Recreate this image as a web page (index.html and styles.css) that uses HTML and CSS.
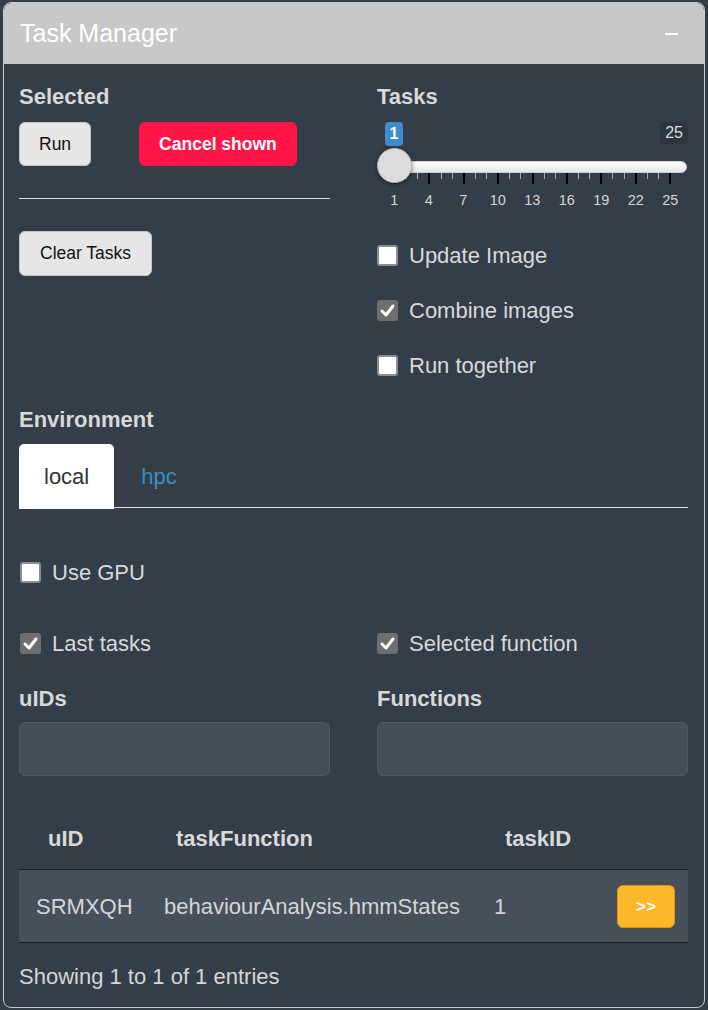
FILE: index.html
```html
<!DOCTYPE html>
<html>
<head>
<meta charset="utf-8">
<link rel="stylesheet" href="styles.css">
</head>
<body>
<div class="panel">
  <div class="panel-head">
    <span class="title">Task Manager</span>
    <span class="minus"></span>
  </div>
  <div class="panel-body">
    <div class="cols top">
      <div class="col">
        <div class="lbl">Selected</div>
        <div class="btnrow">
          <button class="btn">Run</button>
          <button class="btn danger">Cancel shown</button>
        </div>
        <hr class="sep">
        <button class="btn clear">Clear Tasks</button>
      </div>
      <div class="col">
        <div class="lbl">Tasks</div>
        <div class="slider">
          <span class="irs-single">1</span>
          <span class="irs-max">25</span>
          <div class="track"></div>
          <div class="ticks">
            <i class="maj"></i><i></i><i></i><i class="maj"></i><i></i><i></i><i class="maj"></i><i></i><i></i><i class="maj"></i><i></i><i></i><i class="maj"></i><i></i><i></i><i class="maj"></i><i></i><i></i><i class="maj"></i><i></i><i></i><i class="maj"></i><i></i><i></i><i class="maj"></i>
          </div>
          <div class="grid-labels">
            <span>1</span><span>4</span><span>7</span><span>10</span><span>13</span><span>16</span><span>19</span><span>22</span><span>25</span>
          </div>
          <div class="handle"></div>
        </div>
        <label class="chk first"><span class="box"></span>Update Image</label>
        <label class="chk"><span class="box on"><svg viewBox="0 0 21 21" width="21" height="21"><polyline points="5,11 9,15 16,6" fill="none" stroke="#fff" stroke-width="3" stroke-linecap="round" stroke-linejoin="round"/></svg></span>Combine images</label>
        <label class="chk"><span class="box"></span>Run together</label>
      </div>
    </div>

    <div class="lbl env">Environment</div>
    <div class="tabs">
      <span class="tab active">local</span>
      <span class="tab">hpc</span>
    </div>

    <label class="chk gpu"><span class="box"></span>Use GPU</label>

    <div class="cols opts">
      <label class="chk"><span class="box on"><svg viewBox="0 0 21 21" width="21" height="21"><polyline points="5,11 9,15 16,6" fill="none" stroke="#fff" stroke-width="3" stroke-linecap="round" stroke-linejoin="round"/></svg></span>Last tasks</label>
      <label class="chk"><span class="box on"><svg viewBox="0 0 21 21" width="21" height="21"><polyline points="5,11 9,15 16,6" fill="none" stroke="#fff" stroke-width="3" stroke-linecap="round" stroke-linejoin="round"/></svg></span>Selected function</label>
    </div>

    <div class="cols fields">
      <div class="col">
        <div class="lbl">uIDs</div>
        <div class="input"></div>
      </div>
      <div class="col">
        <div class="lbl">Functions</div>
        <div class="input"></div>
      </div>
    </div>

    <table class="tbl">
      <colgroup>
        <col class="c1"><col class="c2"><col class="c3"><col class="c4">
      </colgroup>
      <thead>
        <tr><th>uID</th><th>taskFunction</th><th>taskID</th><th></th></tr>
      </thead>
      <tbody>
        <tr><td>SRMXQH</td><td>behaviourAnalysis.hmmStates</td><td>1</td><td><button class="go">&gt;&gt;</button></td></tr>
      </tbody>
    </table>
    <div class="info">Showing 1 to 1 of 1 entries</div>
  </div>
</div>
</body>
</html>
```

FILE: styles.css
```css
* { box-sizing: border-box; }
html, body { margin: 0; }
body {
  background: #343e48;
  padding: 2px 3px 0 3px;
  font-family: "Liberation Sans", Arial, sans-serif;
  color: #d9d9d9;
}
.panel {
  border: 1px solid #c9c9c9;
  border-radius: 8px;
  height: 1006px;
  overflow: hidden;
}
.panel-head {
  background: #c8c8c8;
  height: 61px;
  display: flex;
  align-items: center;
  justify-content: space-between;
  padding: 0 26px 0 16px;
  border-radius: 7px 7px 0 0;
}
.title { color: #fff; font-size: 25px; }
.minus { width: 13px; height: 2px; background: #fff; }
.panel-body { padding: 20px 16px 0 15px; }
.cols {
  display: grid;
  grid-template-columns: 1fr 1fr;
  column-gap: 47px;
}
.lbl {
  font-size: 22px;
  font-weight: bold;
  line-height: 26px;
  height: 26px;
  color: #d9d9d9;
}
.btnrow { display: flex; margin-top: 12px; }
.btn {
  font-family: "Liberation Sans", Arial, sans-serif;
  font-size: 17.5px;
  height: 44px;
  padding: 0 19px;
  background: #e6e6e6;
  border: 1px solid #c4c4c4;
  border-radius: 6px;
  color: #111;
}
.btn.danger {
  margin-left: 48px;
  background: #ff1548;
  border-color: #ff1548;
  color: #fff;
  font-weight: bold;
  padding: 0 19px;
}
.sep {
  border: 0;
  border-top: 1px solid #dcdcdc;
  margin: 32px 0 0 0;
  width: 311px;
}
.btn.clear { margin-top: 32px; height: 45px; padding: 0 20px; }

.slider { position: relative; height: 93px; margin-top: 12px; }
.irs-single {
  position: absolute; left: 8px; top: 0;
  width: 18px; height: 24px;
  background: #428bca; color: #fff;
  border-radius: 4px;
  font-size: 16px; font-weight: bold;
  text-align: center; line-height: 24px;
}
.irs-max {
  position: absolute; right: 0; top: 0;
  height: 22px; padding: 0 5px;
  background: #2c353e; color: #ddd;
  border-radius: 4px;
  font-size: 16px; line-height: 22px;
}
.track {
  position: absolute; left: 3px; right: 1px; top: 39px; height: 12px;
  border-radius: 6px;
  background: linear-gradient(#ffffff, #e6e6e6);
  border: 1px solid #d0d0d0;
}
.ticks {
  position: absolute; left: 17px; top: 51px; width: 277px;
  display: flex; justify-content: space-between; align-items: flex-start;
}
.ticks i { display: block; width: 1px; height: 6px; background: #a8a8a8; }
.ticks i.maj { height: 11px; width: 2px; background: #000; }
.grid-labels {
  position: absolute; left: 0; top: 70px; width: 311px;
  display: flex;
}
.grid-labels span {
  width: 34.5px; text-align: center;
  font-size: 14.5px; line-height: 16px; color: #d6d6d6;
}
.handle {
  position: absolute; left: 0; top: 26px;
  width: 35px; height: 35px; border-radius: 50%;
  background: #dcdcdc;
  border: 1px solid #b9b9b9;
  box-shadow: 0 1px 4px rgba(0,0,0,0.5);
}

.chk {
  display: flex; align-items: center;
  height: 25px; font-size: 22px; line-height: 25px;
  color: #d9d9d9;
  margin-top: 30px;
}
.chk.first { margin-top: 28px; }
.box {
  width: 21px; height: 21px; flex: none;
  background: #fff; border: 2px solid #8a8d93;
  border-radius: 3px; margin-right: 11px;
  display: flex; align-items: center; justify-content: center;
}
.box.on { background: #6e6e6e; border-color: #6e6e6e; }
.box svg { flex: none; }

.lbl.env { margin-top: 29px; }
.tabs {
  margin-top: 11px;
  display: flex;
  height: 64px;
  border-bottom: 1px solid #dcdcdc;
}
.tab {
  font-size: 22px; line-height: 66px;
  padding: 0 25px;
  color: #3a8ec4;
  margin-right: 2px;
}
.tab.active {
  background: #fff; color: #333;
  border-radius: 5px 5px 0 0;
  margin-bottom: -1px;
  height: 65px;
}
.chk.gpu { margin-top: 52px; margin-left: 1px; }
.cols.opts { margin-top: 46px; }
.cols.opts .chk { margin-top: 0; }
.cols.opts .chk:first-child { margin-left: 1px; }
.cols.fields { margin-top: 30px; }
.input {
  margin-top: 10px; height: 54px;
  background: #434e58;
  border: 1px solid #4e5964;
  border-radius: 6px;
}

.tbl {
  margin-top: 35px;
  width: 669px;
  border-collapse: collapse;
  table-layout: fixed;
  font-size: 22px;
}
.c1 { width: 128px; } .c2 { width: 330px; } .c3 { width: 123px; }
.tbl th {
  text-align: left; font-weight: bold; color: #d9d9d9;
  height: 58px; padding: 0 0 2px 29px;
  border-bottom: 1px solid #1c2127;
}
.tbl th:nth-child(3) { padding-left: 28px; }
.tbl td {
  height: 73px; padding: 2px 0 0 17px;
  background: #46505b; color: #d6d6d6;
  border-bottom: 1px solid #1c2127;
}
.go {
  width: 58px; height: 43px;
  background: #fbb829; border: 1px solid #d9980f;
  border-radius: 6px; color: #fff;
  font-family: "Liberation Sans", Arial, sans-serif;
  font-size: 17px; font-weight: bold;
}
.info { margin-top: 21px; font-size: 22px; line-height: 26px; color: #d6d6d6; }
```
